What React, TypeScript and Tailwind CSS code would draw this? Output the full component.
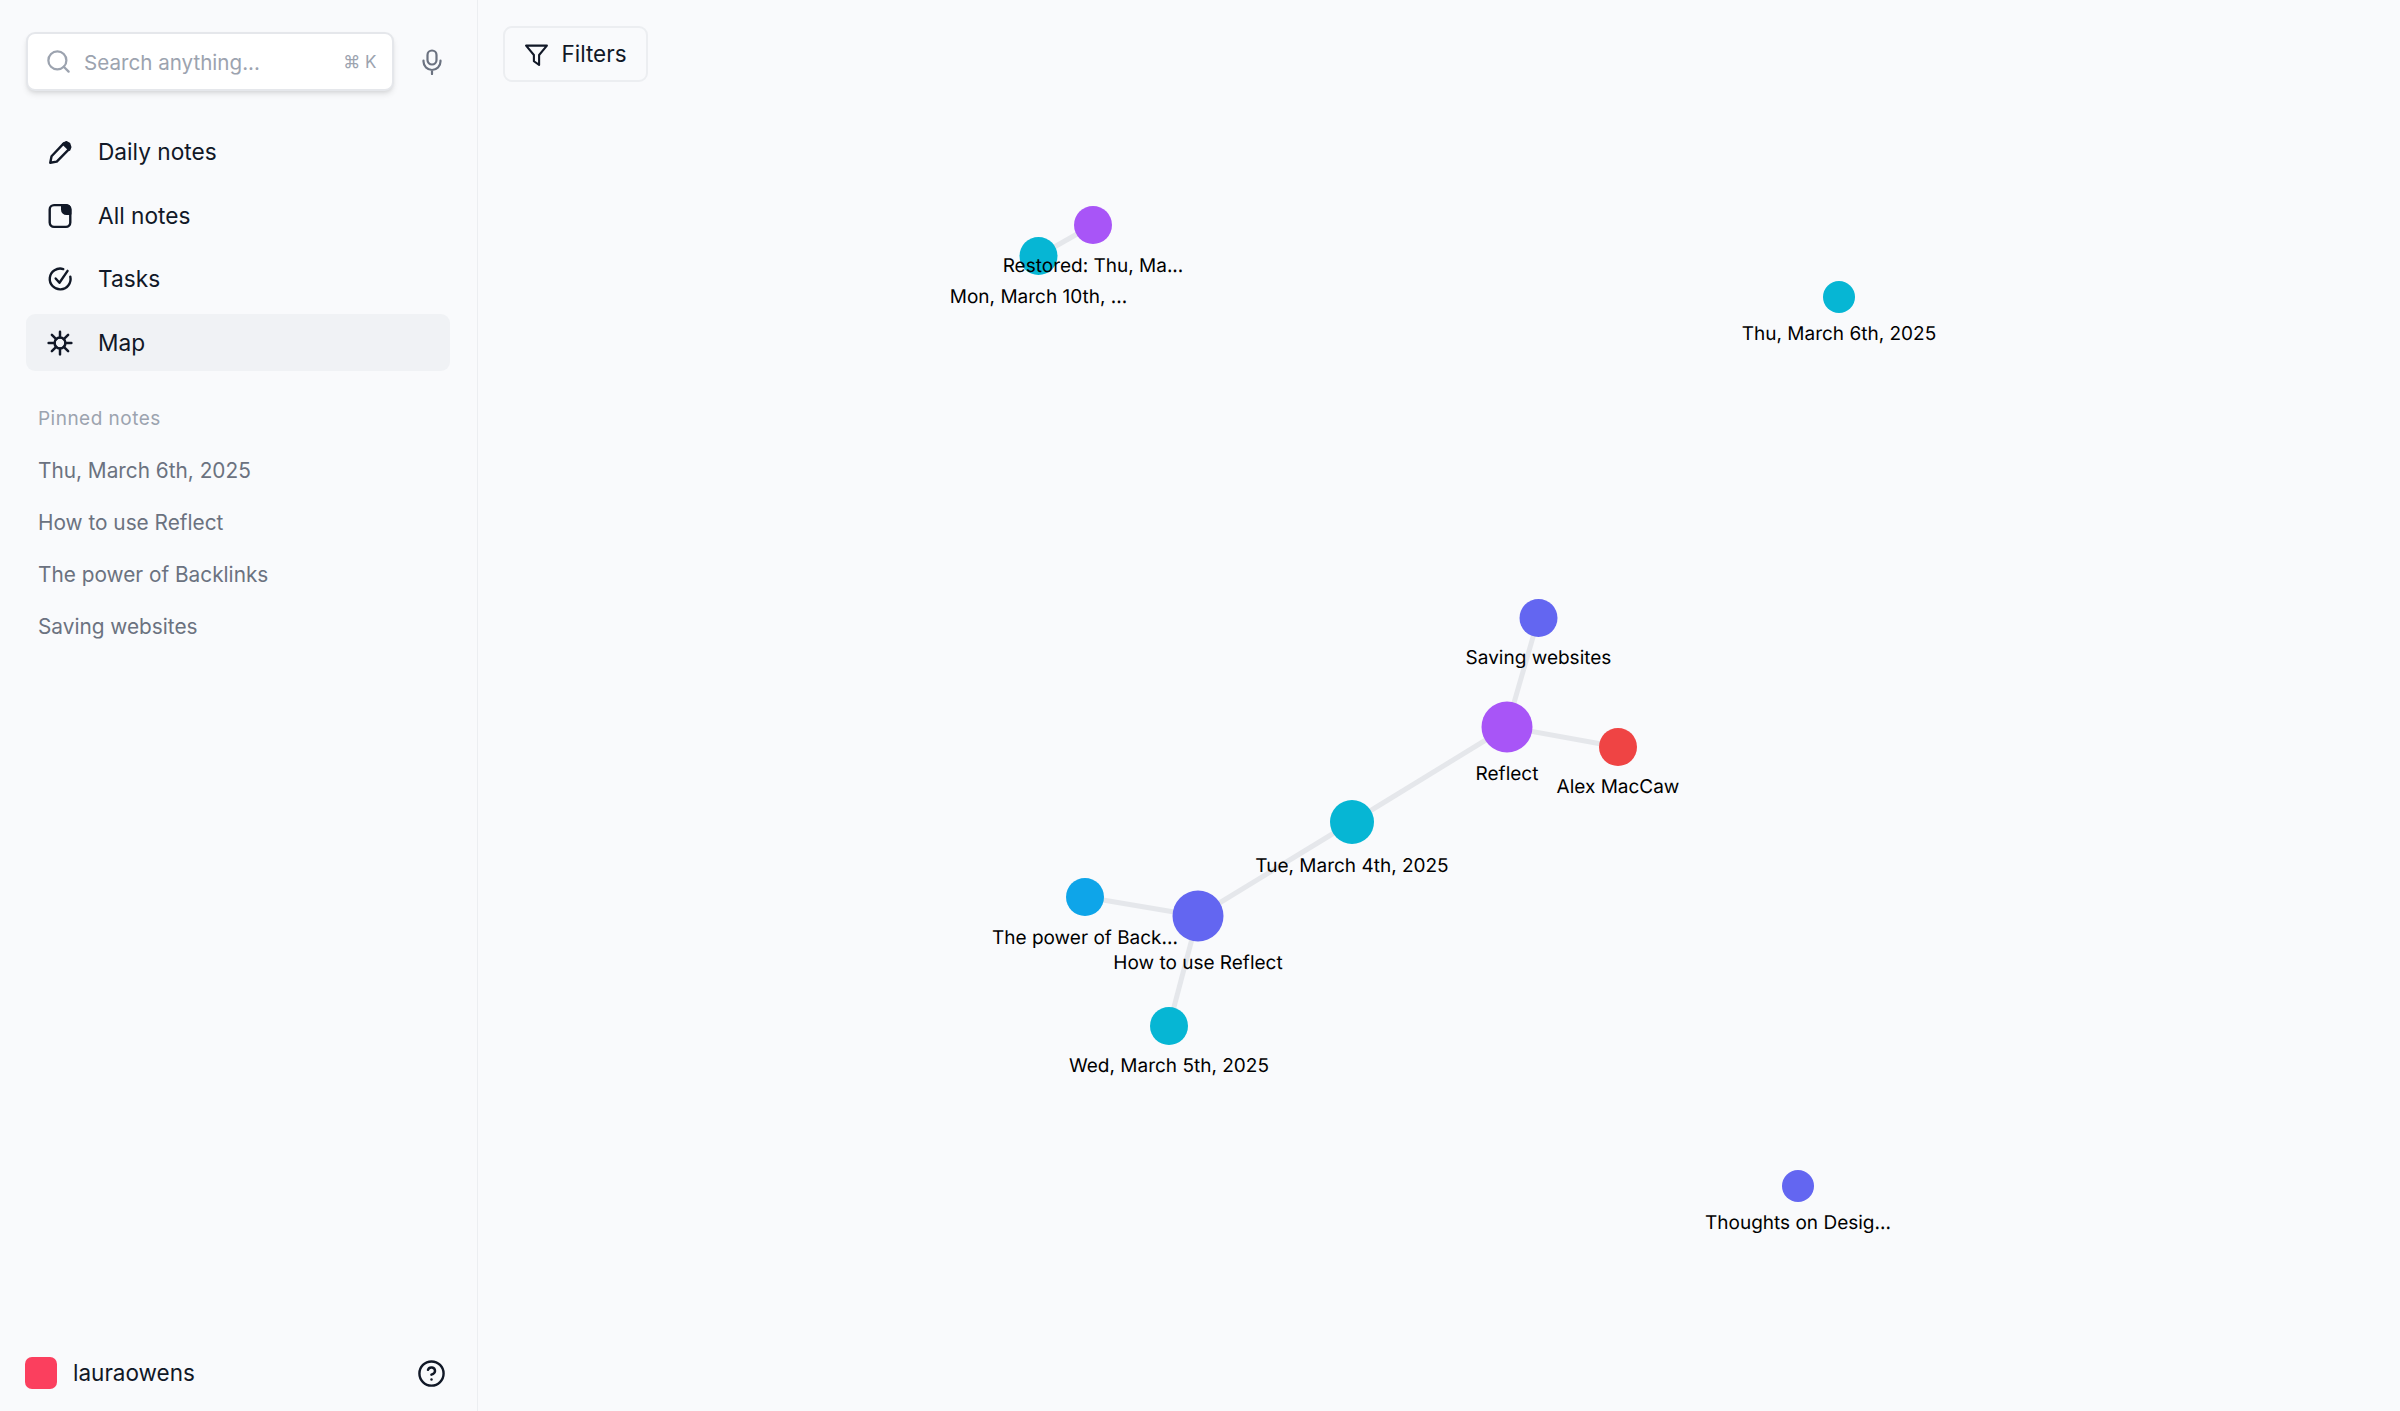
import { HelpCircle, Search } from 'lucide-react'
import type { ReactNode } from 'react'

const font = { fontFamily: 'Inter, "Liberation Sans", sans-serif' }

type Node = { label: string; x: number; y: number; r: number; color: string; ly: number }

const NODES: Node[] = [
  { label: 'Mon, March 10th, ...', x: 1038.5, y: 256, r: 19, color: '#06b6d4', ly: 296 },
  { label: 'Restored: Thu, Ma...', x: 1093, y: 225, r: 19, color: '#a855f7', ly: 265 },
  { label: 'Thu, March 6th, 2025', x: 1839, y: 297, r: 16, color: '#06b6d4', ly: 333 },
  { label: 'Saving websites', x: 1538.5, y: 618, r: 19, color: '#6366f1', ly: 657 },
  { label: 'Reflect', x: 1507, y: 727, r: 25.5, color: '#a855f7', ly: 773 },
  { label: 'Alex MacCaw', x: 1618, y: 747, r: 19, color: '#ef4444', ly: 786 },
  { label: 'Tue, March 4th, 2025', x: 1352, y: 822, r: 22, color: '#06b6d4', ly: 865 },
  { label: 'The power of Back...', x: 1085, y: 897, r: 19, color: '#0ea5e9', ly: 937 },
  { label: 'How to use Reflect', x: 1198, y: 916, r: 25.5, color: '#6366f1', ly: 962 },
  { label: 'Wed, March 5th, 2025', x: 1169, y: 1026, r: 19, color: '#06b6d4', ly: 1065 },
  { label: 'Thoughts on Desig...', x: 1798, y: 1186, r: 16, color: '#6366f1', ly: 1222 },
]

const EDGES = [
  [0, 1],
  [3, 4],
  [4, 5],
  [4, 6],
  [6, 8],
  [7, 8],
  [8, 9],
]

function PencilIcon() {
  return (
    <svg viewBox="0 0 24 24" className="h-[26px] w-[26px]" fill="none" stroke="#111827" strokeWidth="2.2" strokeLinejoin="round">
      <path d="M3 21l1.200-6L14.800 3.800a3 3 0 0 1 4.200 0l.9.9a3 3 0 0 1 0 4.200L9 20z" />
      <path d="M15 3.500l5.500 5.500 1-2.500-1-3-2.500-1.500z" fill="#111827" />
    </svg>
  )
}

function NoteIcon() {
  return (
    <svg viewBox="0 0 24 24" className="h-[26px] w-[26px]" fill="none" stroke="#111827" strokeWidth="2.2" strokeLinejoin="round">
      <rect x="2.500" y="2" width="19" height="20" rx="4" />
      <path d="M14 2h3.500a4 4 0 0 1 4 4v4h-3.500a4 4 0 0 1-4-4z" fill="#111827" />
    </svg>
  )
}

function TaskIcon() {
  return (
    <svg viewBox="0 0 24 24" className="h-[26px] w-[26px]" fill="none" stroke="#111827" strokeWidth="2.200" strokeLinecap="round" strokeLinejoin="round">
      <path d="M15 2.800a9.600 9.600 0 1 0 6.500 7" />
      <path d="M8 11.500l3.500 4L19 4.500" />
    </svg>
  )
}

function MapIcon() {
  return (
    <svg viewBox="0 0 24 24" className="h-[26px] w-[26px]" fill="none" stroke="#111827" strokeWidth="2.300" strokeLinecap="round">
      <circle cx="12" cy="12" r="5" />
      <path d="M12 1.500V7M12 17v5.500M1.500 12H7M17 12h5.500M4.500 4.500l4 4M15.500 15.500l4 4M19.500 4.500l-4 4M8.500 15.500l-4 4" />
    </svg>
  )
}

function MicIcon() {
  return (
    <svg viewBox="0 0 20 26" className="h-[26px] w-[20px]" fill="none" stroke="#6b7280" strokeWidth="2.200" strokeLinecap="round" strokeLinejoin="round">
      <rect x="5.500" y="1.500" width="9" height="14" rx="4.500" />
      <path d="M1.500 11.500v1a8.500 8.500 0 0 0 17 0v-1M10 21v4" />
    </svg>
  )
}

function FunnelIcon() {
  return (
    <svg viewBox="0 0 24 24" className="h-[25px] w-[25px]" fill="none" stroke="#111827" strokeWidth="2" strokeLinejoin="round" strokeLinecap="round">
      <path d="M2 3.500h20l-7.500 9V22L9.500 18.500v-6z" />
    </svg>
  )
}

function NavRow({ icon, label, active }: { icon: ReactNode; label: string; active?: boolean }) {
  return (
    <div className={`flex h-[57px] items-center gap-[25px] rounded-[9px] pl-[21px] text-[22.700px] text-[#111827] ${active ? 'bg-[#f0f2f5]' : ''}`}>
      <span className="flex w-[26px] justify-center">{icon}</span>
      <span>{label}</span>
    </div>
  )
}

export default function App() {
  return (
    <div className="flex h-[1411px] w-[2400px] overflow-hidden bg-[#f9fafc]" style={font}>
      <aside className="flex w-[478px] shrink-0 flex-col border-r border-[#eceef1] pb-[21px]">
        <div className="flex items-center gap-[28px] pl-[25.500px] pt-[32px]">
          <div className="flex h-[59px] w-[368px] items-center rounded-[9px] border-2 border-[#e5e7eb] bg-white pl-[17px] pr-[15px] shadow-md">
            <Search size={27} strokeWidth={2} className="text-[#9ca3af]" />
            <span className="ml-[12.500px] flex-1 pt-[3px] text-[20.600px] leading-[28px] text-[#9ca3af]">Search anything...</span>
            <span className="pt-[3px] text-[17px] text-[#9ca3af]">⌘ K</span>
          </div>
          <MicIcon />
        </div>

        <nav className="ml-[26px] mt-[33px] flex w-[424px] flex-col gap-[6.400px]">
          <NavRow icon={<PencilIcon />} label="Daily notes" />
          <NavRow icon={<NoteIcon />} label="All notes" />
          <NavRow icon={<TaskIcon />} label="Tasks" />
          <NavRow icon={<MapIcon />} label="Map" active />
        </nav>

        <div className="mt-[34.500px] pl-[38px]">
          <div className="text-[19px] leading-[26px] tracking-wide text-[#9ca3af]">Pinned notes</div>
          <div className="mt-[26px] flex flex-col gap-[26px] text-[20.800px] leading-[26px] text-[#6b7280]">
            <div>Thu, March 6th, 2025</div>
            <div>How to use Reflect</div>
            <div>The power of Backlinks</div>
            <div>Saving websites</div>
          </div>
        </div>

        <div className="mt-auto flex items-center pl-[25px] pr-[31px]">
          <div className="h-[32px] w-[32px] rounded-[7px] bg-[#fb3f5e]" />
          <span className="ml-[16px] flex-1 text-[22.500px] text-[#111827]">lauraowens</span>
          <HelpCircle size={29} strokeWidth={2} className="text-[#111827]" />
        </div>
      </aside>

      <main className="relative flex-1 pl-[25px] pt-[26px]">
        <div className="flex h-[56px] w-[145px] items-center justify-center gap-[12px] rounded-[9px] border-2 border-[#eceef1] text-[22.500px] text-[#111827]">
          <FunnelIcon />
          Filters
        </div>

        <svg className="pointer-events-none absolute inset-0 h-full w-full" viewBox="478 0 1922 1411">
          {EDGES.map(([a, b]) => (
            <line
              key={`${a}-${b}`}
              x1={NODES[a].x}
              y1={NODES[a].y}
              x2={NODES[b].x}
              y2={NODES[b].y}
              stroke="#e5e7eb"
              strokeWidth="5"
            />
          ))}
          {NODES.map((n) => (
            <circle key={n.label} cx={n.x} cy={n.y} r={n.r} fill={n.color} />
          ))}
          {NODES.map((n) => (
            <text key={n.label} x={n.x} y={n.ly} dy="0.35em" textAnchor="middle" fontSize="19" fontFamily="Inter, sans-serif" fill="#000" textRendering="geometricPrecision">
              {n.label}
            </text>
          ))}
        </svg>
      </main>
    </div>
  )
}
